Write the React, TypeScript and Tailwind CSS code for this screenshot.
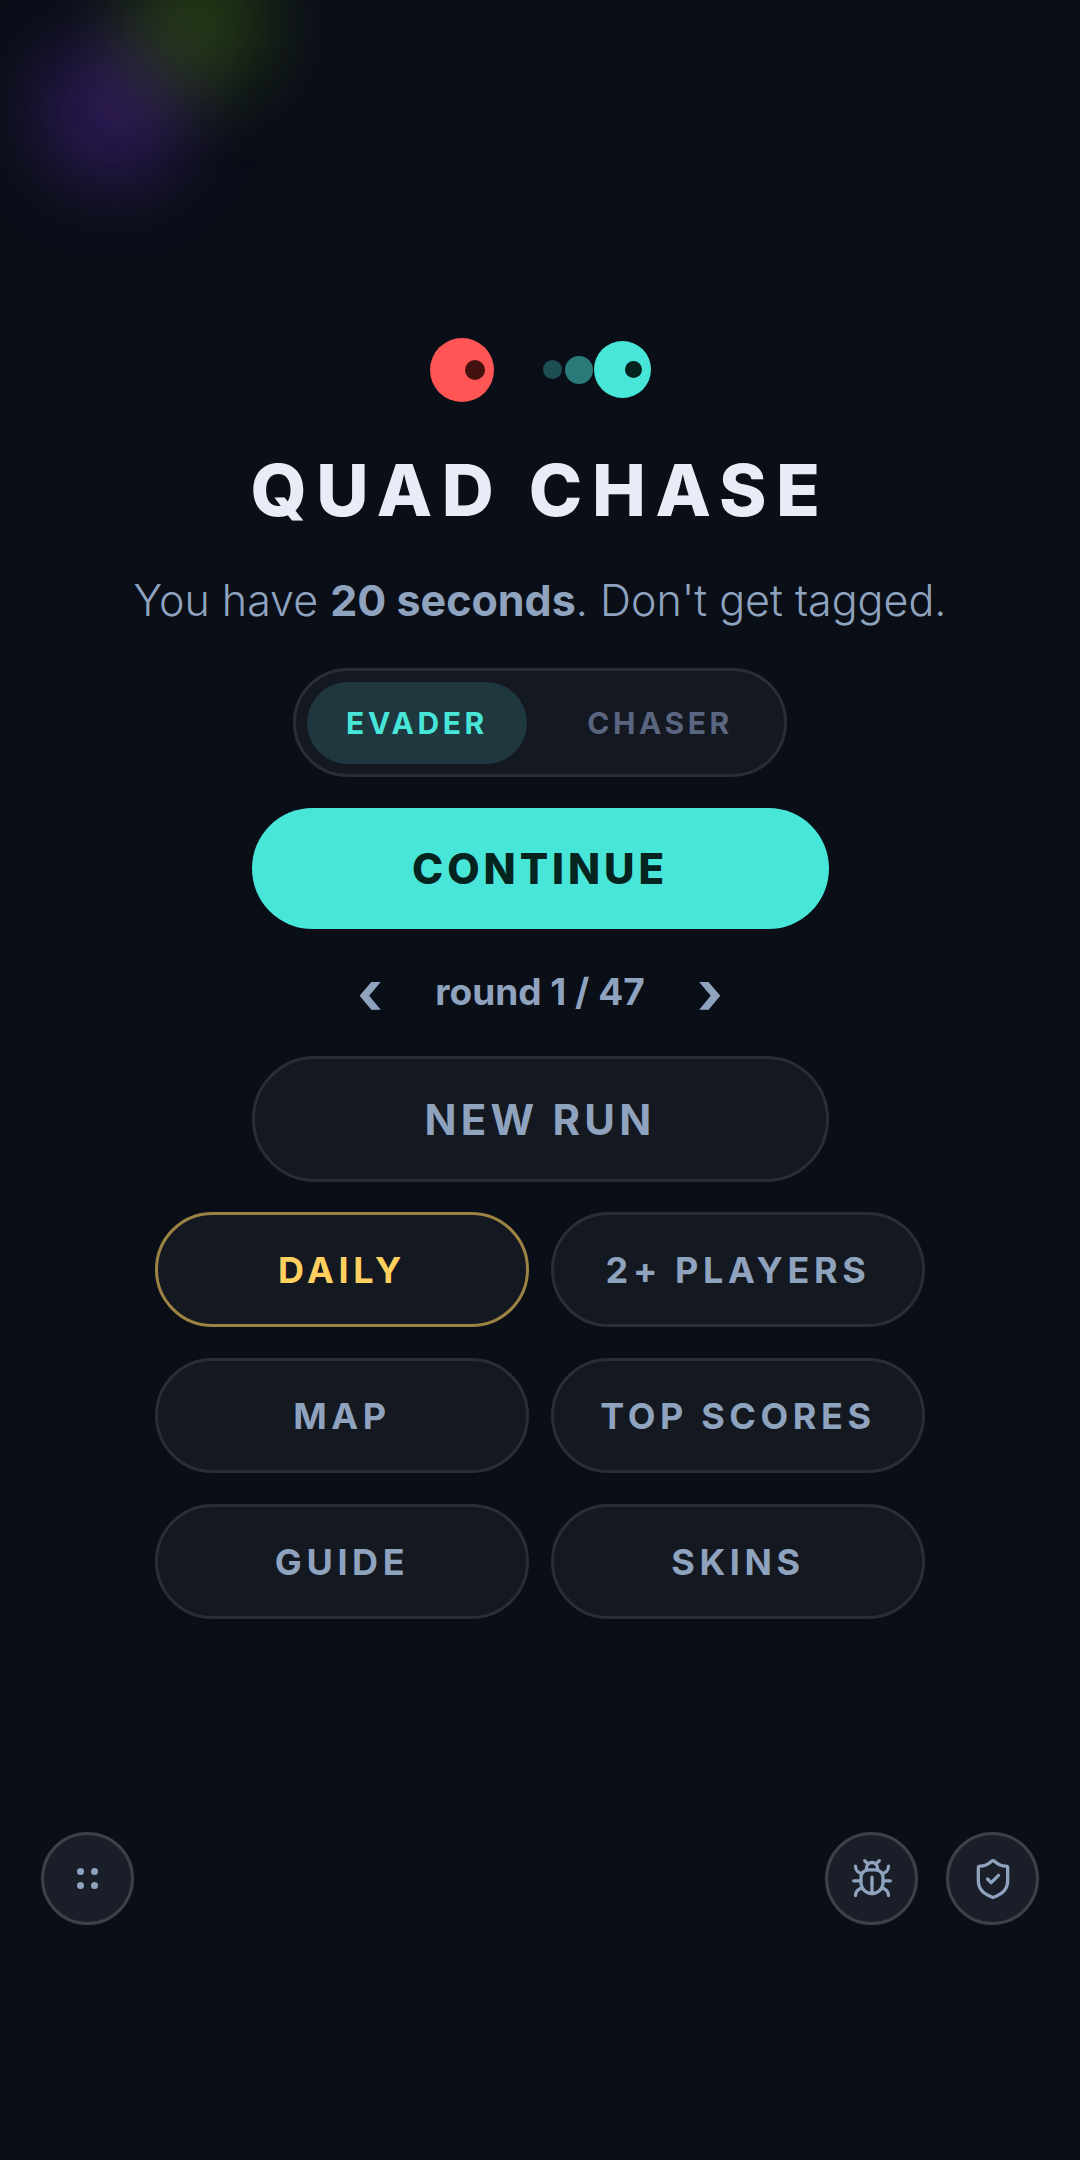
import React from 'react';
import { Bug, ShieldCheck } from 'lucide-react';

const MENU_ROWS: Array<Array<{ label: string; gold?: boolean }>> = [
  [{ label: 'DAILY', gold: true }, { label: '2+ PLAYERS' }],
  [{ label: 'MAP' }, { label: 'TOP SCORES' }],
  [{ label: 'GUIDE' }, { label: 'SKINS' }],
];

const App: React.FC = () => {
  return (
    <div className="relative w-[1080px] h-[2160px] overflow-hidden bg-[#0a0e17] font-['Inter',sans-serif] flex flex-col items-center">
      {/* Background glows */}
      <div className="absolute left-[38px] top-[36px] w-[150px] h-[150px] rounded-full bg-[#5f2bb0]/40 blur-[38px]" />
      <div className="absolute left-[125px] top-[-50px] w-[145px] h-[145px] rounded-full bg-[#4d7a12]/40 blur-[38px]" />

      {/* Logo */}
      <div className="relative mt-[337px] h-[65px] w-[577px] flex items-center">
        <div className="ml-[178px] w-[64px] h-[64px] rounded-full bg-[#ff5555] flex items-center pl-[35px]">
          <div className="w-[20px] h-[20px] rounded-full bg-[#43110f]" />
        </div>
        <div className="ml-[49px] w-[19px] h-[19px] rounded-full bg-[#48e5d9]/30" />
        <div className="ml-[3px] w-[28px] h-[28px] rounded-full bg-[#48e5d9]/50" />
        <div className="ml-px w-[57px] h-[57px] rounded-full bg-[#48e5d9] flex items-center pl-[31px]">
          <div className="w-[17px] h-[17px] rounded-full bg-[#06241f]" />
        </div>
      </div>

      <h1 className="mt-[44px] text-[72px] leading-[88px] font-extrabold tracking-[9.6px] text-[#e8ecf6] whitespace-nowrap">
        QUAD CHASE
      </h1>

      <p className="mt-[40px] text-[43px] leading-[52px] font-light text-[#8fa3bf] whitespace-nowrap">
        You have <b className="font-bold">20 seconds</b>. Don't get tagged.
      </p>

      {/* Role toggle */}
      <div className="mt-[42px] w-[494px] h-[109px] rounded-full border-[3px] border-[#2a2d38] bg-[#141820] flex items-center pl-[11px]">
        <div className="w-[220px] h-[82px] rounded-full bg-[#1f373f] flex items-center justify-center pt-[2px] text-[30px] font-bold tracking-[3.6px] text-[#48e5d9]">
          EVADER
        </div>
        <div className="ml-[23px] w-[220px] flex items-center justify-center pt-[2px] text-[30px] font-bold tracking-[3.6px] text-[#5a6680]">
          CHASER
        </div>
      </div>

      <button className="mt-[31px] w-[577px] h-[121px] rounded-full bg-[#48e5d9] text-[42px] font-extrabold tracking-[3.9px] text-[#06241f]">
        CONTINUE
      </button>

      {/* Round picker */}
      <div className="mt-[33px] h-[60px] w-[366px] flex items-center justify-between text-[#8fa3bf] font-bold">
        <span className="text-[60px] leading-[60px]">‹</span>
        <span className="text-[37px] leading-[44px]">round 1 / 47</span>
        <span className="text-[60px] leading-[60px]">›</span>
      </div>

      <button className="mt-[34px] w-[577px] h-[126px] rounded-full border-[3px] border-[#2a2d38] bg-[#141820] text-[42px] font-bold tracking-[4.2px] text-[#8fa3bf]">
        NEW RUN
      </button>

      {/* Menu grid */}
      <div className="mt-[30px] flex flex-col gap-[31px]">
        {MENU_ROWS.map((row) => (
          <div key={row[0].label} className="flex gap-[22px]">
            {row.map((item) => (
              <button
                key={item.label}
                className={`w-[374px] h-[115px] rounded-full border-[3px] bg-[#141820] text-[36px] font-bold tracking-[4.6px] ${
                  item.gold ? 'border-[#9c8344] text-[#ffd05f]' : 'border-[#2a2d38] text-[#8fa3bf]'
                }`}
              >
                {item.label}
              </button>
            ))}
          </div>
        ))}
      </div>

      {/* Bottom controls */}
      <div className="mt-[213px] w-full pl-[41px] pr-[41px] flex items-center justify-between">
        <button className="w-[93px] h-[93px] rounded-full border-[3px] border-[#3c4049] bg-[#1a1e28] flex items-center justify-center">
          <span className="grid grid-cols-2 gap-[7px]">
            <span className="w-[7px] h-[7px] rounded-full bg-[#8fa3bf]" />
            <span className="w-[7px] h-[7px] rounded-full bg-[#8fa3bf]" />
            <span className="w-[7px] h-[7px] rounded-full bg-[#8fa3bf]" />
            <span className="w-[7px] h-[7px] rounded-full bg-[#8fa3bf]" />
          </span>
        </button>
        <div className="flex gap-[28px]">
          <button className="w-[93px] h-[93px] rounded-full border-[3px] border-[#3c4049] bg-[#1a1e28] flex items-center justify-center text-[#8fa3bf]">
            <Bug size={44} strokeWidth={1.8} />
          </button>
          <button className="w-[93px] h-[93px] rounded-full border-[3px] border-[#3c4049] bg-[#1a1e28] flex items-center justify-center text-[#8fa3bf]">
            <ShieldCheck size={44} strokeWidth={1.8} />
          </button>
        </div>
      </div>
    </div>
  );
};

export default App;
